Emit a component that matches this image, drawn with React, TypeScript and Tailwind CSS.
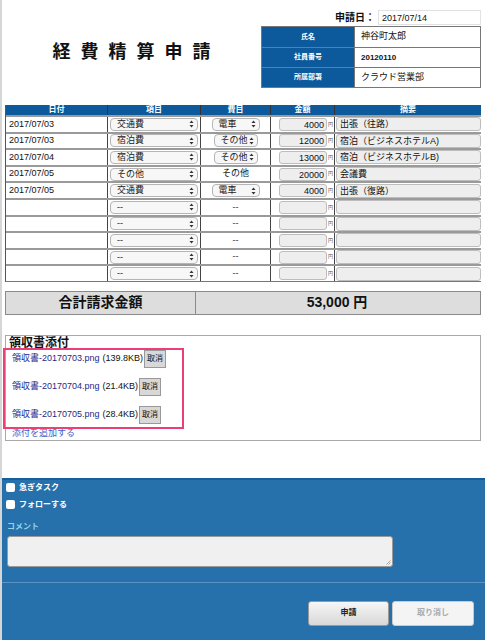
import React from 'react';

type Row = {
  date: string;
  item: string;
  sub: 'select' | 'text' | 'none';
  subLabel: string;
  amount: string;
  note: string;
};

const rows: Row[] = [
  { date: '2017/07/03', item: '交通費', sub: 'select', subLabel: '電車', amount: '4000', note: '出張（往路）' },
  { date: '2017/07/03', item: '宿泊費', sub: 'select', subLabel: 'その他', amount: '12000', note: '宿泊（ビジネスホテルA)' },
  { date: '2017/07/04', item: '宿泊費', sub: 'select', subLabel: 'その他', amount: '13000', note: '宿泊（ビジネスホテルB)' },
  { date: '2017/07/05', item: 'その他', sub: 'text', subLabel: 'その他', amount: '20000', note: '会議費' },
  { date: '2017/07/05', item: '交通費', sub: 'select', subLabel: '電車', amount: '4000', note: '出張（復路）' },
  { date: '', item: '--', sub: 'none', subLabel: '--', amount: '', note: '' },
  { date: '', item: '--', sub: 'none', subLabel: '--', amount: '', note: '' },
  { date: '', item: '--', sub: 'none', subLabel: '--', amount: '', note: '' },
  { date: '', item: '--', sub: 'none', subLabel: '--', amount: '', note: '' },
  { date: '', item: '--', sub: 'none', subLabel: '--', amount: '', note: '' },
];

const files = [
  { name: '領収書-20170703.png', size: '(139.8KB)' },
  { name: '領収書-20170704.png', size: '(21.4KB)' },
  { name: '領収書-20170705.png', size: '(28.4KB)' },
];

const Arrows = () => (
  <svg width="5" height="8" viewBox="0 0 5 8" className="shrink-0">
    <path d="M2.5 0.5 L4.5 3 L0.5 3 Z" fill="#333" />
    <path d="M2.5 7.5 L4.5 5 L0.5 5 Z" fill="#333" />
  </svg>
);

const FakeSelect = ({ label, className }: { label: string; className: string }) => (
  <div
    className={`flex items-center justify-between h-[13px] rounded-[4px] border border-[#b5b5b5] bg-[#f7f7f7] pl-[6px] pr-[3px] text-[9px] leading-none text-[#222] ${className}`}
  >
    <span>{label}</span>
    <Arrows />
  </div>
);

export default function App() {
  return (
    <div
      className="w-[485px] h-[640px] overflow-hidden bg-white border-l-2 border-[#d6d6d6] flex flex-col"
      style={{ fontFamily: '"Liberation Sans", "Noto Sans CJK JP", sans-serif' }}
    >
      {/* header */}
      <div className="flex h-[100px] shrink-0">
        <div className="w-[259px] flex items-center justify-center">
          <h1 className="text-[18px] font-bold tracking-[10px] text-[#111] pl-[10px] mt-[4px]">経費精算申請</h1>
        </div>
        <div className="flex-1 pt-[10px] pr-[4px]">
          <div className="flex items-center justify-end h-[15px]">
            <span className="text-[10px] font-bold text-[#111] mr-[3px]">申請日：</span>
            <div className="w-[103px] h-[15px] border border-[#e2e2e2] px-[3px] text-[9px] leading-[14px] text-[#111]">
              2017/07/14
            </div>
          </div>
          <div className="mt-[1px] border border-[#777] text-[9px]">
            {[
              ['氏名', '神谷町太郎'],
              ['社員番号', '20120110'],
              ['所属部署', 'クラウド営業部'],
            ].map(([k, v], i) => (
              <div key={k} className={`flex h-[20px] ${i > 0 ? 'border-t border-[#777]' : ''}`}>
                <div className="w-[93px] bg-[#0c5a9c] text-white font-bold text-[7px] flex items-center justify-center border-r border-[#777]">
                  {k}
                </div>
                <div className="flex-1 flex items-center pl-[6px] text-[#111]">
                  <span className={i === 1 ? 'text-[8px] font-bold' : 'text-[9px]'}>{v}</span>
                </div>
              </div>
            ))}
          </div>
        </div>
      </div>

      {/* detail table */}
      <div className="ml-[3px] mt-[5px] w-[476px] border-l border-[#555] border-b border-b-[#777]">
        <div className="grid grid-cols-[102px_93px_70px_64px_1fr] h-[10px] bg-[#0c5a9c] text-white text-[8px] font-bold leading-[10px] text-center">
          <div className="border-r border-[#333]">日付</div>
          <div className="border-r border-[#333]">項目</div>
          <div className="border-r border-[#333]">費目</div>
          <div className="border-r border-[#333]">金額</div>
          <div>摘要</div>
        </div>
        {rows.map((r, i) => (
          <div
            key={i}
            className="grid grid-cols-[102px_93px_70px_64px_1fr] h-[16.6px] border-t-2 border-[#9a9a9a] text-[9px] text-[#111]"
          >
            <div className="border-r border-[#444] flex items-center pl-[3px]">{r.date}</div>
            <div className="border-r border-[#444] flex items-center px-[2px]">
              <FakeSelect label={r.item} className="w-full" />
            </div>
            <div className="border-r border-[#444] flex items-center justify-center">
              {r.sub === 'select' && (
                <FakeSelect label={r.subLabel} className={r.subLabel === '電車' ? 'w-[48px]' : 'w-[44px]'} />
              )}
              {r.sub === 'text' && <span>{r.subLabel}</span>}
              {r.sub === 'none' && <span className="text-[#333]">--</span>}
            </div>
            <div className="border-r border-[#444] flex items-center pl-[8px]">
              <div className="w-[48px] h-[13px] rounded-[3px] border border-[#bdbdbd] bg-[#eeeeee] text-right pr-[2px] leading-[12px]">
                {r.amount}
              </div>
              <span className="text-[5px] text-[#555] ml-[1px]">円</span>
            </div>
            <div className="flex items-center pl-[1px]">
              <div className="w-full h-[14px] rounded-[3px] border border-[#bdbdbd] bg-[#eeeeee] pl-[3px] leading-[13px]">
                {r.note}
              </div>
            </div>
          </div>
        ))}
      </div>

      {/* total */}
      <div className="ml-[3px] mt-[9px] w-[476px] h-[24px] flex bg-[#dddddd] border border-[#8a8a8a]">
        <div className="w-[190px] border-r border-[#8a8a8a] flex items-center justify-center text-[14px] font-bold text-[#111]">
          合計請求金額
        </div>
        <div className="flex-1 flex items-center justify-center text-[14px] font-bold text-[#111] pr-[2px]">
          53,000 円
        </div>
      </div>

      {/* receipts */}
      <div className="ml-[3px] mt-[20px] w-[476px] h-[106px] border border-[#a8a8a8] relative">
        <div className="pl-[3px] pt-[1px] text-[12px] font-bold text-[#111] leading-[13px]">領収書添付</div>
        <div className="absolute left-[-3px] top-[12px] w-[181px] h-[81px] border-2 border-[#ea3f77] pointer-events-none" />
        <div className="pl-[6px] flex flex-col gap-[10px]">
          {files.map((f) => (
            <div key={f.name} className="flex items-center h-[18px] text-[9px]">
              <span className="text-[#252a8a]">{f.name}</span>
              <span className="ml-[3px] text-[#111]">{f.size}</span>
              <span className="ml-[1px] w-[22px] h-[18px] flex items-center justify-center bg-[#d8d8d8] border border-[#999] text-[8px] text-[#111]">
                取消
              </span>
            </div>
          ))}
        </div>
        <div className="pl-[6px] text-[9px] text-[#3a62c9] leading-[10px] mt-[4px]">添付を追加する</div>
      </div>

      {/* bottom panel */}
      <div className="mt-[37px] flex-1 bg-[#2670ac] border-t-2 border-[#175e9c] flex flex-col">
        <div className="pl-[4px] pt-[2px] flex flex-col gap-[5px]">
          <label className="flex items-center gap-[4px] text-[8px] font-bold text-white">
            <span className="w-[9px] h-[9px] bg-white rounded-[2px]" />
            急ぎタスク
          </label>
          <label className="flex items-center gap-[4px] text-[8px] font-bold text-white">
            <span className="w-[9px] h-[9px] bg-white rounded-[2px]" />
            フォローする
          </label>
        </div>
        <div className="pl-[5px] mt-[10px] text-[8px] font-bold text-[#93d6e2]">コメント</div>
        <div className="ml-[5px] mt-[3px] w-[386px] h-[31px] rounded-[3px] bg-[#f0f0f0] border border-[#9a9a9a] relative">
          <svg width="5" height="5" viewBox="0 0 5 5" className="absolute right-[1px] bottom-[1px]">
            <path d="M4.5 0.5 L0.5 4.5 M4.5 2.5 L2.5 4.5" stroke="#888" strokeWidth="0.7" />
          </svg>
        </div>
        <div className="mt-[15px] border-t border-[#5a93c4]" />
        <div className="flex justify-end gap-[3px] pr-[11px] mt-[18px]">
          <button className="w-[81px] h-[25px] rounded-[3px] border border-[#999] bg-gradient-to-b from-[#f6f6f6] to-[#d8d8d8] text-[8px] font-bold text-[#222]">
            申請
          </button>
          <button className="w-[82px] h-[25px] rounded-[3px] border border-[#c9c9c9] bg-[#f4f4f4] text-[8px] font-bold text-[#aaa]">
            取り消し
          </button>
        </div>
      </div>
    </div>
  );
}
